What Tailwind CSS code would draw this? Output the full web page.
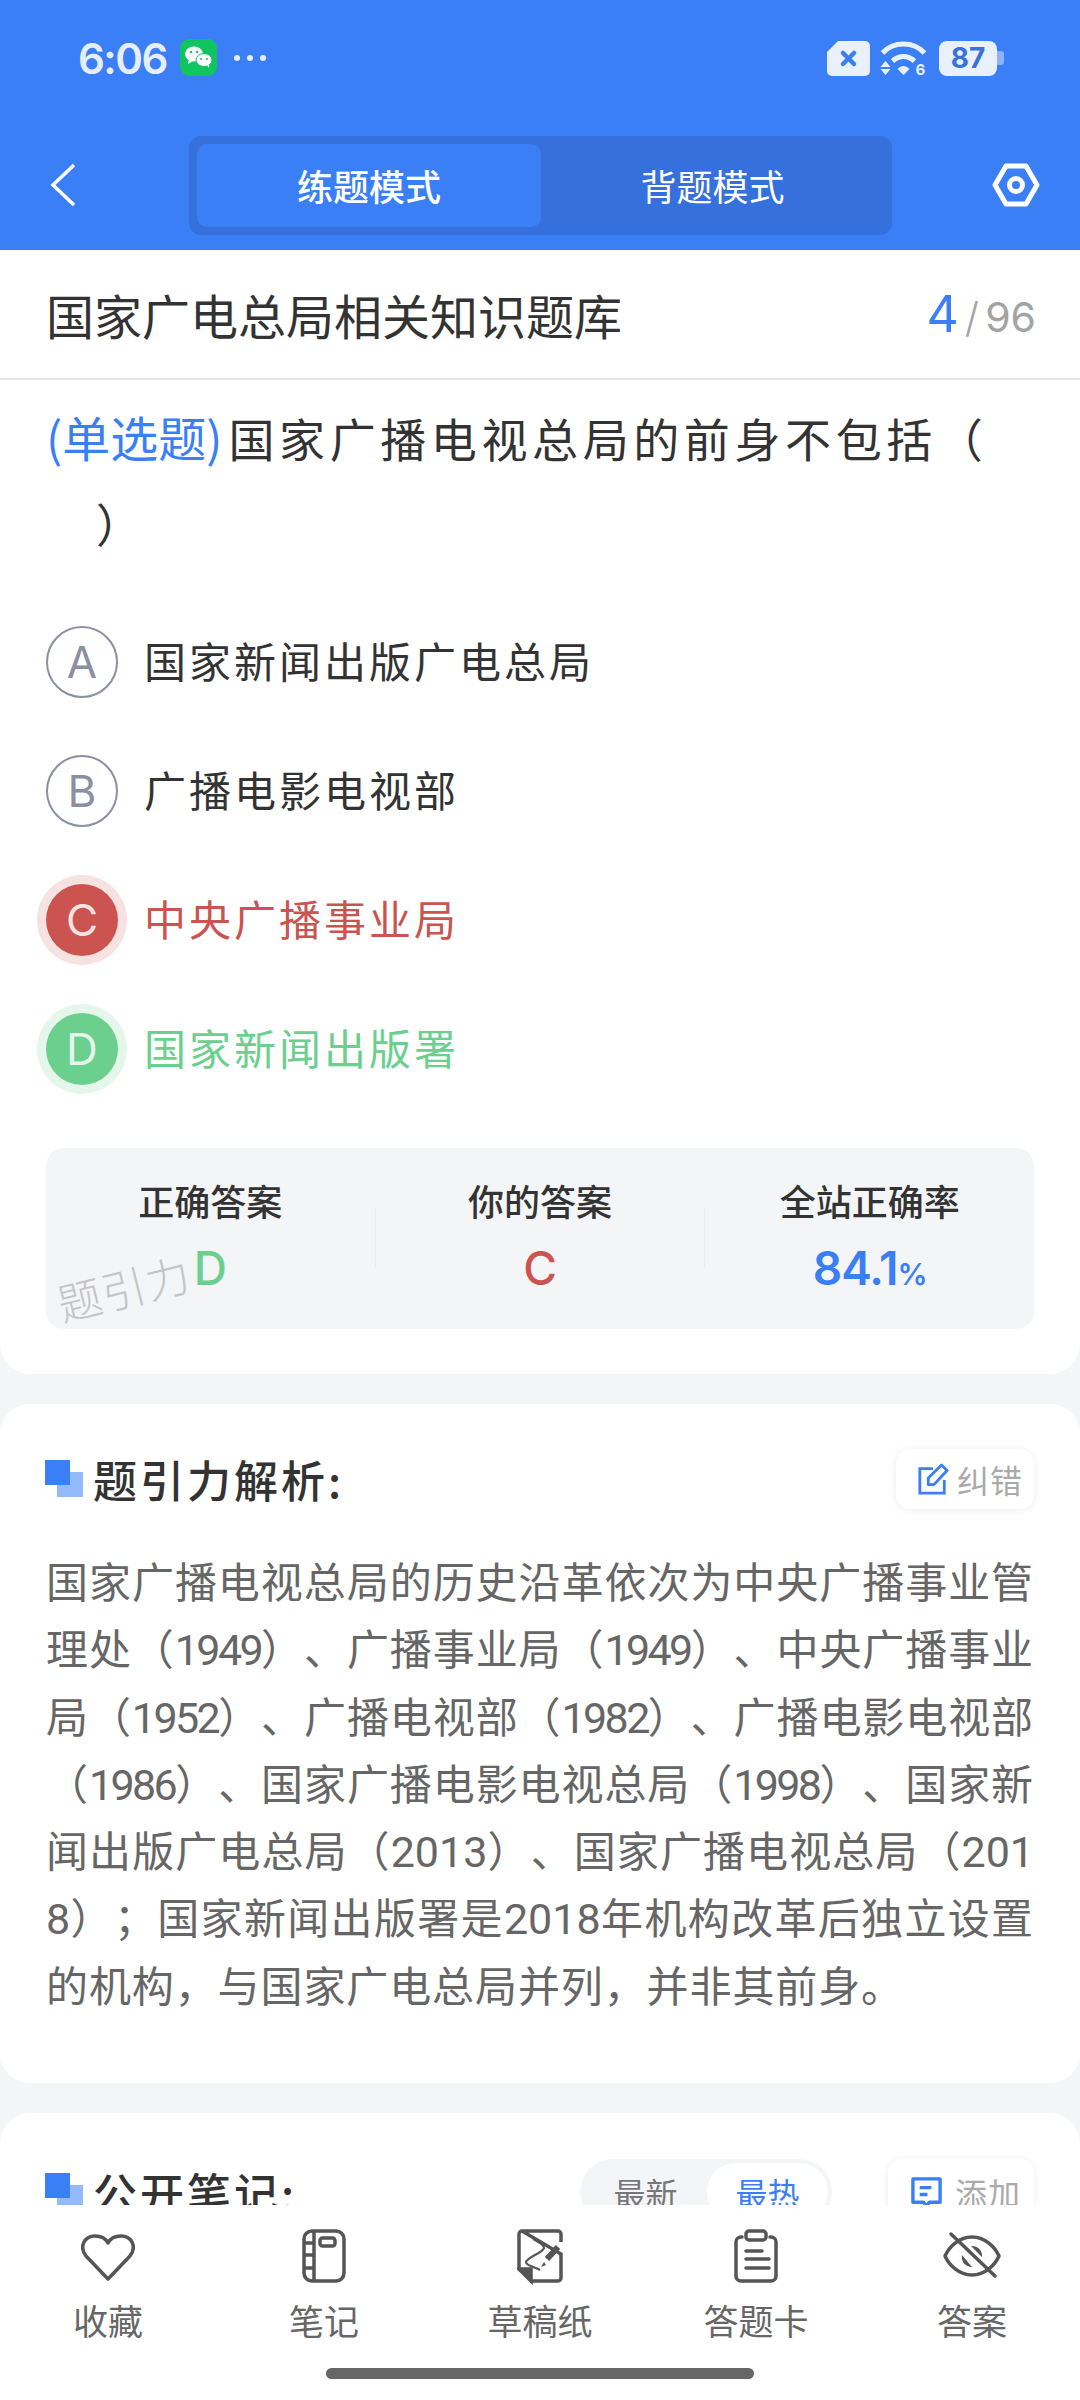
<!DOCTYPE html>
<html lang="zh-CN">
  <head>
    <meta charset="UTF-8" />
    <title>练题模式</title>
    <script src="https://cdn.jsdelivr.net/npm/@tailwindcss/browser@4"></script>
  </head>
  <body class="bg-[#f4f5f7] font-['Noto_Sans_CJK_SC',sans-serif]">
    <div class="flex flex-col h-[2400px] overflow-hidden">
      <!-- status bar + toolbar -->
      <header class="bg-[#3b7ff6] h-[250px] shrink-0 text-white">
        <div class="flex items-center h-[116px] pl-[78px] pr-[76px]">
          <span class="font-['Inter',sans-serif] font-semibold text-[42px] tracking-[-1.5px] text-[#e6eefe] w-[102px]">6:06</span>
          <svg class="mb-[2px]" width="37" height="37" viewBox="0 0 37 37">
            <rect width="37" height="37" rx="9" fill="#10c45f" />
            <ellipse cx="14" cy="15" rx="9" ry="7.5" fill="#fff" />
            <path d="M9 20l-1 5 5-3z" fill="#fff" />
            <ellipse cx="24" cy="21" rx="8" ry="6.5" fill="#fff" stroke="#10c45f" stroke-width="1" />
            <path d="M27 26l2 3 0-4z" fill="#fff" />
            <circle cx="11" cy="13" r="1.2" fill="#10c45f" />
            <circle cx="17" cy="13" r="1.2" fill="#10c45f" />
            <circle cx="21" cy="20" r="1" fill="#10c45f" />
            <circle cx="27" cy="20" r="1" fill="#10c45f" />
          </svg>
          <div class="flex gap-[7px] ml-[17px]">
            <span class="w-[6px] h-[6px] rounded-full bg-[#e6eefe]"></span>
            <span class="w-[6px] h-[6px] rounded-full bg-[#e6eefe]"></span>
            <span class="w-[6px] h-[6px] rounded-full bg-[#e6eefe]"></span>
          </div>
          <div class="flex-1"></div>
          <svg width="44" height="35" viewBox="0 0 44 35">
            <path d="M12 0h27a5 5 0 0 1 5 5v25a5 5 0 0 1-5 5H6a5 5 0 0 1-5-5V11z" fill="#e9f0fe" />
            <path d="M17 12l11 11M28 12L17 23" stroke="#3b7ff6" stroke-width="4.5" stroke-linecap="round" />
          </svg>
          <svg class="ml-[10px]" width="47" height="36" viewBox="0 0 46 36" fill="none">
            <path d="M2 13C13 1 33 1 44 13" stroke="#e9f0fe" stroke-width="5" />
            <path d="M12 21c7-6 15-6 22 0" stroke="#e9f0fe" stroke-width="5" />
            <path d="M17 29c4-4 8-4 12 0l-6 6z" fill="#e9f0fe" />
            <path d="M0 27l5-6 5 6zM0 29h10l-5 6z" fill="#e9f0fe" />
            <text x="35" y="35" font-size="15" font-weight="700" font-family="Inter" fill="#e9f0fe">6</text>
          </svg>
          <div class="ml-[12px] flex items-center">
            <div class="w-[58px] h-[35px] rounded-[8px] bg-[#e9f0fe] flex items-center justify-center font-['Inter',sans-serif] font-bold text-[28px] text-[#3b72d8] leading-none">87</div>
            <div class="w-[7px] h-[14px] rounded-r-[3px] bg-[#8db4fa]"></div>
          </div>
        </div>
        <div class="flex items-center h-[134px] pt-[4px]">
          <svg class="ml-[50px]" width="26" height="44" viewBox="0 0 26 44" fill="none">
            <path d="M24 2L3 22l21 20" stroke="#fff" stroke-width="3.5" />
          </svg>
          <div class="ml-[113px] w-[703px] h-[99px] rounded-[12px] bg-[#3570dd] p-[8px] flex text-[36px]">
            <div class="w-[344px] rounded-[10px] bg-[#3b7ff6] flex items-center justify-center font-medium">练题模式</div>
            <div class="flex-1 flex items-center justify-center">背题模式</div>
          </div>
          <svg class="ml-[100px]" width="48" height="44" viewBox="0 0 48 44" fill="none" stroke="#fff" stroke-width="5">
            <path d="M14 3h20l11 19-11 19H14L3 22z" stroke-linejoin="round" />
            <circle cx="24" cy="22" r="6.5" />
          </svg>
        </div>
      </header>

      <div class="flex-1 overflow-hidden min-h-0">
        <!-- question card -->
        <section class="bg-white rounded-b-[30px] h-[1124px] overflow-hidden">
          <div class="h-[130px] border-b-2 border-[#e5e5e5] flex items-center justify-between pl-[46px] pr-[44px]">
            <h1 class="text-[48px] text-[#333]">国家广电总局相关知识题库</h1>
            <div class="text-[#a3a3a3] text-[41px] font-['Inter',sans-serif]">
              <span class="text-[#3b7ff6] text-[50px]">4</span><span class="mx-[6px] font-light">/</span>96
            </div>
          </div>
          <p class="mt-[14px] px-[46px] text-[46px] leading-[85px] tracking-[4.6px] text-[#333]">
            <span class="text-[#3b7ff6] text-[48px] tracking-normal mr-[6px]">(单选题)</span>国家广播电视总局的前身不包括（<br /><span class="pl-[50px]">）</span>
          </p>
          <div class="mt-[61px] px-[46px] flex flex-col gap-[57px]">
            <div class="flex items-center h-[72px] gap-[26px] text-[42px] tracking-[3px] text-[#333]">
              <span class="w-[72px] h-[72px] rounded-full border-2 border-[#8a8fa3] flex items-center justify-center font-['Inter',sans-serif] text-[44px] text-[#8a8fa3] tracking-normal">A</span>
              <span class="pb-[6px]">国家新闻出版广电总局</span>
            </div>
            <div class="flex items-center h-[72px] gap-[26px] text-[42px] tracking-[3px] text-[#333]">
              <span class="w-[72px] h-[72px] rounded-full border-2 border-[#8a8fa3] flex items-center justify-center font-['Inter',sans-serif] text-[44px] text-[#8a8fa3] tracking-normal">B</span>
              <span class="pb-[6px]">广播电影电视部</span>
            </div>
            <div class="flex items-center h-[72px] gap-[26px] text-[42px] tracking-[3px] text-[#cb5450]">
              <span class="w-[72px] h-[72px] rounded-full bg-[#cb5450] ring-[9px] ring-[#f6e2e1] flex items-center justify-center font-['Inter',sans-serif] text-[44px] text-[#f6e2e1] tracking-normal">C</span>
              <span class="pb-[6px]">中央广播事业局</span>
            </div>
            <div class="flex items-center h-[72px] gap-[26px] text-[42px] tracking-[3px] text-[#6bcf8e]">
              <span class="w-[72px] h-[72px] rounded-full bg-[#6bcf8e] ring-[9px] ring-[#e4f7ea] flex items-center justify-center font-['Inter',sans-serif] text-[44px] text-[#e4f7ea] tracking-normal">D</span>
              <span class="pb-[6px]">国家新闻出版署</span>
            </div>
          </div>
          <!-- answer stats -->
          <div class="relative mx-[46px] mt-[63px] h-[181px] rounded-[18px] bg-[#f4f5f7] flex text-center">
            <div class="flex-1 pt-[27px]">
              <div class="text-[36px] font-medium text-[#333] leading-[50px]">正确答案</div>
              <div class="text-[46px] font-['Inter',sans-serif] font-medium text-[#6bcf8e] leading-[56px] mt-[15px]">D</div>
            </div>
            <div class="w-px h-[60px] mt-[60px] bg-[#ebecee]"></div>
            <div class="flex-1 pt-[27px]">
              <div class="text-[36px] font-medium text-[#333] leading-[50px]">你的答案</div>
              <div class="text-[46px] font-['Inter',sans-serif] font-medium text-[#cb5450] leading-[56px] mt-[15px]">C</div>
            </div>
            <div class="w-px h-[60px] mt-[60px] bg-[#ebecee]"></div>
            <div class="flex-1 pt-[27px]">
              <div class="text-[36px] font-medium text-[#333] leading-[50px]">全站正确率</div>
              <div class="text-[46px] font-['Inter',sans-serif] font-semibold tracking-[-1px] text-[#3b7ff6] leading-[56px] mt-[15px]">84.1<span class="text-[30px]">%</span></div>
            </div>
            <span class="absolute left-[10px] top-[117px] -rotate-[14deg] text-[44px] font-light text-[#c4c4c4] tracking-[1px] leading-none">题引力</span>
          </div>
        </section>

        <!-- analysis card -->
        <section class="mt-[30px] bg-white rounded-[30px] h-[679px] px-[46px] overflow-hidden">
          <div class="flex items-center justify-between pt-[45px]">
            <div class="flex items-center gap-[10px]">
              <svg class="-ml-px" width="38" height="38" viewBox="0 0 38 38"><rect x="12" y="12" width="26" height="25" fill="#93bbfb" /><rect width="25" height="25" fill="#3b7ff6" /></svg>
              <h2 class="text-[44px] font-medium tracking-[3px] text-[#333] leading-[58px]">题引力解析:</h2>
            </div>
            <button class="flex items-center gap-[8px] h-[60px] w-[138px] pl-[21px] rounded-[14px] bg-white shadow-[0_1px_8px_rgba(0,0,0,0.08)] text-[32px] tracking-[1px] text-[#aaa]">
              <svg width="32" height="32" viewBox="0 0 34 34" fill="none" stroke="#3b7ff6" stroke-width="3"><path d="M17 6H3v26h26V18" /><path d="M12 23v-7L26 2l6 6-14 15z" stroke-linejoin="round" /></svg>
              纠错
            </button>
          </div>
          <p class="mt-[37px] text-[42px] leading-[67.3px] tracking-[0.9px] text-[#666] text-justify break-all [text-spacing-trim:space-all]">国家广播电视总局的历史沿革依次为中央广播事业管理处（<span class="font-['Roboto',sans-serif] text-[43px] leading-none tracking-[-2.6px]">1949</span>）、广播事业局（<span class="font-['Roboto',sans-serif] text-[43px] leading-none tracking-[-2.6px]">1949</span>）、中央广播事业局（<span class="font-['Roboto',sans-serif] text-[43px] leading-none tracking-[-2.6px]">1952</span>）、广播电视部（<span class="font-['Roboto',sans-serif] text-[43px] leading-none tracking-[-2.6px]">1982</span>）、广播电影电视部（<span class="font-['Roboto',sans-serif] text-[43px] leading-none tracking-[-2.6px]">1986</span>）、国家广播电影电视总局（<span class="font-['Roboto',sans-serif] text-[43px] leading-none tracking-[-2.6px]">1998</span>）、国家新闻出版广电总局（<span class="font-['Roboto',sans-serif] text-[43px] leading-none tracking-normal">2013</span>）、国家广播电视总局（<span class="font-['Roboto',sans-serif] text-[43px] leading-none tracking-normal">2018</span>）；国家新闻出版署是<span class="font-['Roboto',sans-serif] text-[43px] leading-none tracking-normal">2018</span>年机构改革后独立设置的机构，与国家广电总局并列，并非其前身。</p>
        </section>

        <!-- notes card -->
        <section class="mt-[30px] bg-white rounded-t-[30px] px-[46px] h-[200px]">
          <div class="flex items-center pt-[46px]">
            <svg class="-ml-px" width="38" height="38" viewBox="0 0 38 38"><rect x="12" y="12" width="26" height="25" fill="#93bbfb" /><rect width="25" height="25" fill="#3b7ff6" /></svg>
            <h2 class="ml-[10px] text-[44px] font-medium tracking-[3px] text-[#333] leading-[58px]">公开笔记:</h2>
            <div class="flex-1"></div>
            <div class="flex h-[66px] w-[252px] rounded-full bg-[#f4f5f7] p-[4px] text-[32px]">
              <span class="w-[123px] flex items-center justify-center text-[#777]">最新</span>
              <span class="flex-1 rounded-full bg-white flex items-center justify-center text-[#3b7ff6]">最热</span>
            </div>
            <button class="ml-[56px] flex items-center gap-[12px] h-[66px] w-[146px] pl-[22px] rounded-[14px] bg-white shadow-[0_1px_8px_rgba(0,0,0,0.08)] text-[32px] tracking-[1px] text-[#aaa]">
              <svg width="33" height="33" viewBox="0 0 34 34" fill="none" stroke="#3b7ff6" stroke-width="3.5"><path d="M3 3h28v24H20l-3 4-3-4H3z" stroke-linejoin="round" /><path d="M10 12h12M10 19h8" /></svg>
              添加
            </button>
          </div>
        </section>
      </div>

      <!-- bottom bar -->
      <nav class="relative bg-white h-[195px] shrink-0 grid grid-cols-5 text-center text-[35px] text-[#666]">
        <div class="flex flex-col items-center pt-[24px]">
          <svg width="54" height="64" viewBox="0 0 54 64" fill="none" stroke="#555" stroke-width="3.5">
            <path d="M27 50L5 27C-2 18 3 7 14 7c6 0 11 3 13 7 2-4 7-7 13-7 11 0 16 11 9 20z" stroke-linejoin="round" />
          </svg>
          <span class="mt-[3px] leading-[48px]">收藏</span>
        </div>
        <div class="flex flex-col items-center pt-[24px]">
          <svg width="44" height="64" viewBox="0 0 44 64" fill="none" stroke="#555" stroke-width="3.5">
            <rect x="2" y="2" width="40" height="50" rx="8" />
            <path d="M12 2v50M2 14h10M2 26h10M2 39h10" />
            <rect x="18" y="9" width="15" height="8" rx="2.5" />
          </svg>
          <span class="mt-[3px] leading-[48px]">笔记</span>
        </div>
        <div class="flex flex-col items-center pt-[24px]">
          <svg width="46" height="64" viewBox="0 0 46 64" fill="none" stroke="#555" stroke-width="3.5">
            <path d="M5 2h36a3 3 0 0 1 3 3v8M44 25v24a3 3 0 0 1-3 3H15L2 40V5a3 3 0 0 1 3-3z" />
            <path d="M2 40h12v12z" fill="#555" />
            <path d="M16 10C22 13 27 16 27 19C26 24 10 28 9 33C9 37 18 38 23 41" stroke-width="2.2" />
            <path d="M41 18L30 30" stroke-width="6" />
            <path d="M27 33l-3 5 5-2z" fill="#555" stroke="none" />
          </svg>
          <span class="mt-[3px] leading-[48px]">草稿纸</span>
        </div>
        <div class="flex flex-col items-center pt-[24px]">
          <svg width="44" height="64" viewBox="0 0 44 64" fill="none" stroke="#555" stroke-width="3.5">
            <path d="M8 8H7a5 5 0 0 0-5 5v34a5 5 0 0 0 5 5h30a5 5 0 0 0 5-5V13a5 5 0 0 0-5-5h-1" stroke-linecap="round" />
            <rect x="12" y="2" width="20" height="9" rx="3" />
            <path d="M12 22h16M12 30h23M12 39h23" stroke-width="3.5" stroke-linecap="round" />
          </svg>
          <span class="mt-[3px] leading-[48px]">答题卡</span>
        </div>
        <div class="flex flex-col items-center pt-[24px]">
          <svg width="58" height="64" viewBox="0 0 58 64" fill="none" stroke="#555" stroke-width="3.5">
            <path d="M29 8c13 0 23 10 27 19-4 9-14 19-27 19S6 36 2 27C6 18 16 8 29 8z" stroke-linejoin="round" />
            <path d="M8 5l44 42" stroke-linecap="round" />
            <path d="M28 17a10 10 0 0 1 11 11zM19 26a10 10 0 0 0 10 12z" fill="#555" stroke="none" />
          </svg>
          <span class="mt-[3px] leading-[48px]">答案</span>
        </div>
        <span class="absolute left-[326px] bottom-[21px] w-[428px] h-[11px] rounded-full bg-[#666]"></span>
      </nav>
    </div>
  </body>
</html>
